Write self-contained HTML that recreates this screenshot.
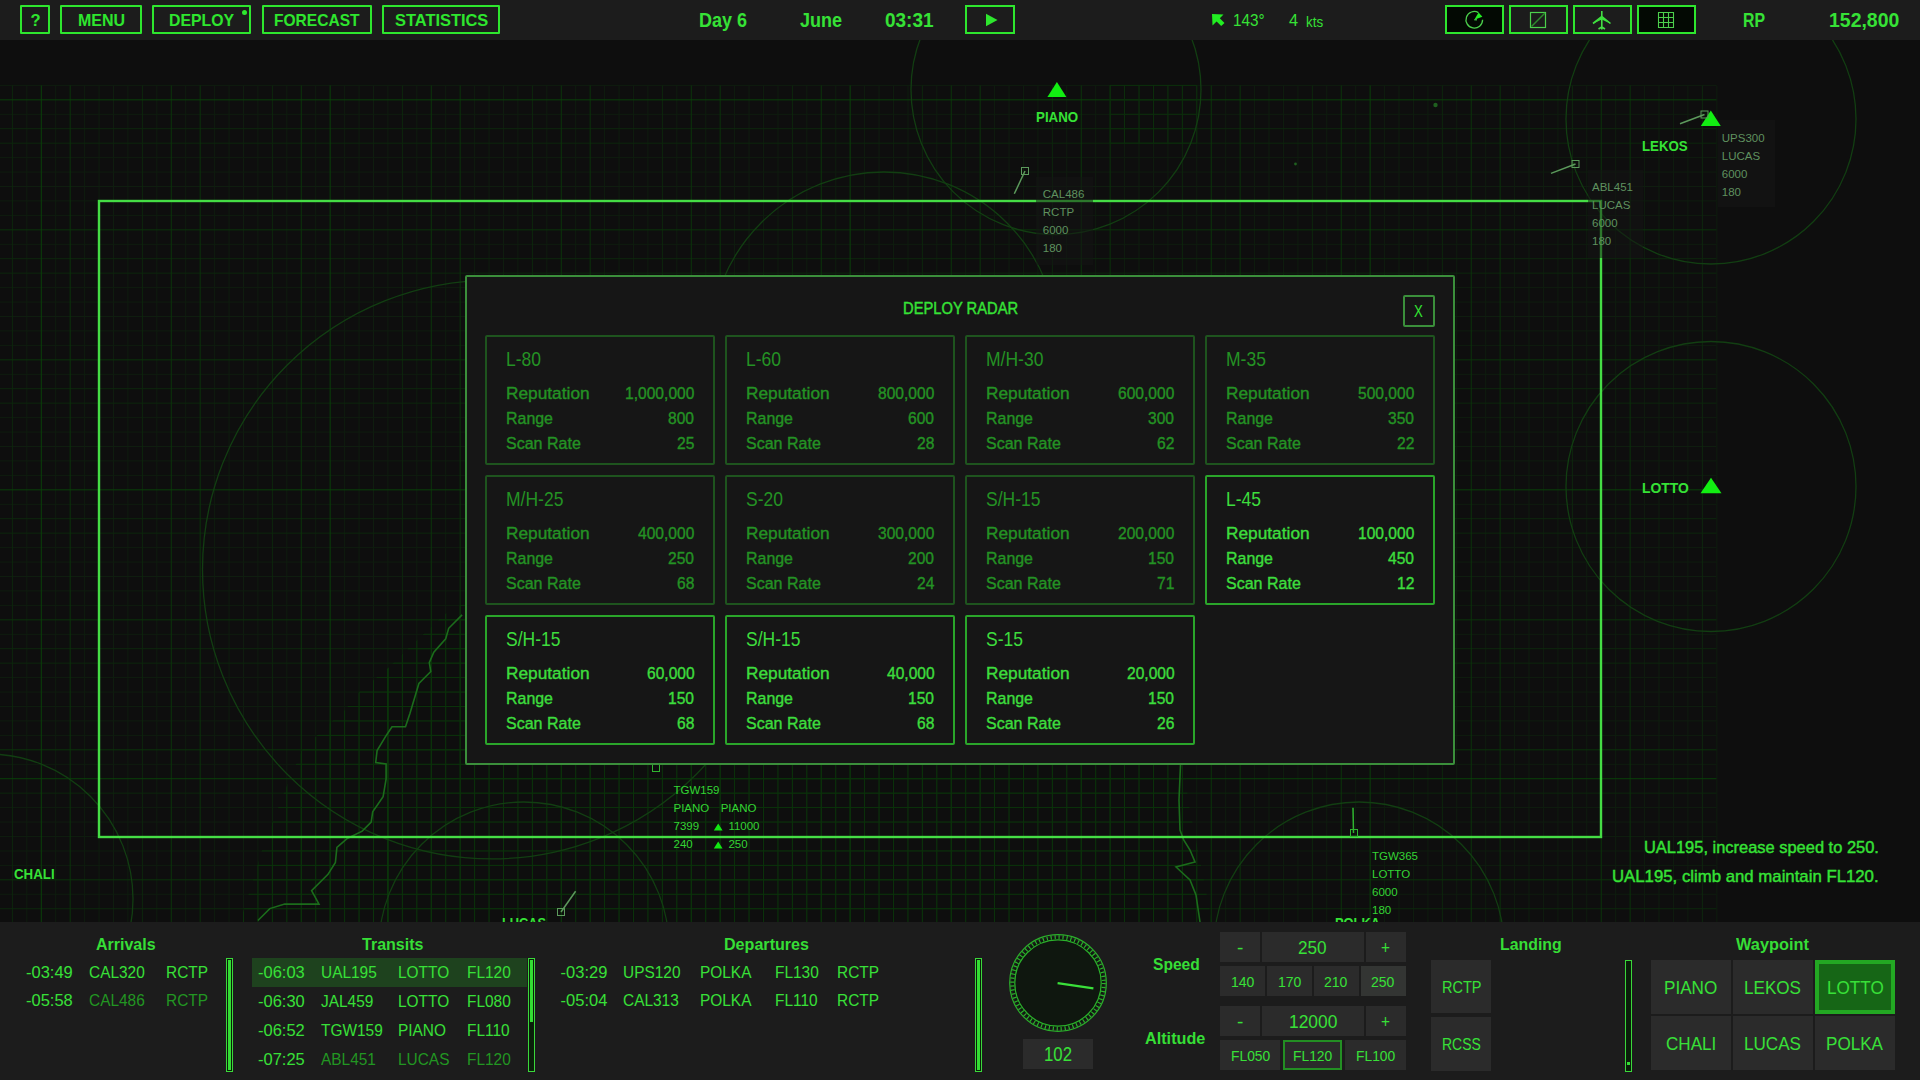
<!DOCTYPE html>
<html><head><meta charset="utf-8"><style>
html,body{margin:0;padding:0;}
body{width:1920px;height:1080px;overflow:hidden;position:relative;background:#0e0e0e;font-family:"Liberation Sans",sans-serif;}
.a{position:absolute;left:0;top:0;}
.t{position:absolute;white-space:nowrap;transform-origin:0 0;}
svg.a{overflow:visible}
</style></head><body>
<svg class="a" width="1920" height="1080" viewBox="0 0 1920 1080"><path d="M-2.04 85.4V1080 M26.84 85.4V1080 M55.73 85.4V1080 M84.62 85.4V1080 M99.06 85.4V1080 M113.51 85.4V1080 M127.95 85.4V1080 M156.84 85.4V1080 M185.73 85.4V1080 M214.62 85.4V1080 M229.06 85.4V1080 M243.50 85.4V1080 M257.95 85.4V1080 M286.84 85.4V1080 M315.72 85.4V1080 M344.61 85.4V1080 M359.06 85.4V1080 M373.50 85.4V1080 M387.94 85.4V1080 M416.83 85.4V1080 M445.72 85.4V1080 M474.61 85.4V1080 M489.05 85.4V1080 M503.50 85.4V1080 M517.94 85.4V1080 M546.83 85.4V1080 M575.72 85.4V1080 M604.60 85.4V1080 M619.05 85.4V1080 M633.49 85.4V1080 M647.94 85.4V1080 M676.82 85.4V1080 M705.71 85.4V1080 M734.60 85.4V1080 M749.04 85.4V1080 M763.49 85.4V1080 M777.93 85.4V1080 M806.82 85.4V1080 M835.71 85.4V1080 M864.60 85.4V1080 M879.04 85.4V1080 M893.48 85.4V1080 M907.93 85.4V1080 M936.82 85.4V1080 M965.70 85.4V1080 M994.59 85.4V1080 M1009.04 85.4V1080 M1023.48 85.4V1080 M1037.92 85.4V1080 M1066.81 85.4V1080 M1095.70 85.4V1080 M1124.59 85.4V1080 M1139.03 85.4V1080 M1153.48 85.4V1080 M1167.92 85.4V1080 M1196.81 85.4V1080 M1225.70 85.4V1080 M1254.58 85.4V1080 M1269.03 85.4V1080 M1283.47 85.4V1080 M1297.92 85.4V1080 M1326.80 85.4V1080 M1355.69 85.4V1080 M1384.58 85.4V1080 M1399.02 85.4V1080 M1413.47 85.4V1080 M1427.91 85.4V1080 M1456.80 85.4V1080 M1485.69 85.4V1080 M1514.58 85.4V1080 M1529.02 85.4V1080 M1543.46 85.4V1080 M1557.91 85.4V1080 M1586.80 85.4V1080 M1615.68 85.4V1080 M1644.57 85.4V1080 M1659.02 85.4V1080 M1673.46 85.4V1080 M1687.90 85.4V1080 M1716.79 85.4V1080 M0 85.40H1716.4 M0 114.29H1716.4 M0 157.62H1716.4 M0 172.06H1716.4 M0 186.51H1716.4 M0 200.95H1716.4 M0 215.40H1716.4 M0 244.28H1716.4 M0 287.62H1716.4 M0 302.06H1716.4 M0 316.50H1716.4 M0 330.95H1716.4 M0 345.39H1716.4 M0 374.28H1716.4 M0 417.61H1716.4 M0 432.06H1716.4 M0 446.50H1716.4 M0 460.94H1716.4 M0 475.39H1716.4 M0 504.28H1716.4 M0 547.61H1716.4 M0 562.05H1716.4 M0 576.50H1716.4 M0 590.94H1716.4 M0 605.38H1716.4 M0 634.27H1716.4 M0 677.60H1716.4 M0 692.05H1716.4 M0 706.49H1716.4 M0 720.94H1716.4 M0 735.38H1716.4 M0 764.27H1716.4 M0 807.60H1716.4 M0 822.04H1716.4 M0 836.49H1716.4 M0 850.93H1716.4 M0 865.38H1716.4 M0 894.26H1716.4" stroke="#0f1d0f" stroke-width="1" fill="none"/><path d="M12.40 85.4V1080 M142.40 85.4V1080 M272.39 85.4V1080 M402.39 85.4V1080 M532.38 85.4V1080 M662.38 85.4V1080 M792.38 85.4V1080 M922.37 85.4V1080 M1052.37 85.4V1080 M1182.36 85.4V1080 M1312.36 85.4V1080 M1442.36 85.4V1080 M1572.35 85.4V1080 M1702.35 85.4V1080 M0 128.73H1716.4 M0 143.18H1716.4 M0 258.73H1716.4 M0 273.17H1716.4 M0 388.72H1716.4 M0 403.17H1716.4 M0 518.72H1716.4 M0 533.16H1716.4 M0 648.72H1716.4 M0 663.16H1716.4 M0 793.16H1716.4 M0 908.71H1716.4" stroke="#0d270d" stroke-width="1" fill="none"/><path d="M70.18 85.4V1080 M171.28 85.4V1080 M200.17 85.4V1080 M301.28 85.4V1080 M431.28 85.4V1080 M460.16 85.4V1080 M561.27 85.4V1080 M590.16 85.4V1080 M691.27 85.4V1080 M720.16 85.4V1080 M821.26 85.4V1080 M951.26 85.4V1080 M980.15 85.4V1080 M1081.26 85.4V1080 M1110.14 85.4V1080 M1211.25 85.4V1080 M1240.14 85.4V1080 M1341.25 85.4V1080 M1471.24 85.4V1080 M1500.13 85.4V1080 M1601.24 85.4V1080 M1630.13 85.4V1080 M0 229.84H1716.4 M0 359.84H1716.4 M0 619.83H1716.4 M0 749.82H1716.4 M0 879.82H1716.4" stroke="#0b340b" stroke-width="1" fill="none"/><path d="M41.29 85.4V1080 M330.17 85.4V1080 M850.15 85.4V1080 M1370.14 85.4V1080 M0 99.84H1716.4 M0 489.83H1716.4 M0 778.71H1716.4" stroke="#0a400a" stroke-width="1" fill="none"/><clipPath id="fc"><polygon points="470,600 445,614 415,642 387,669 359,692 345,710 331,722 302,750 285,790 262,850 240,922 1212,922 1200,860 1188,800 1185,765 470,765"/></clipPath><path clip-path="url(#fc)" d="M214.62 590V922 M229.06 590V922 M243.50 590V922 M257.95 590V922 M272.39 590V922 M286.84 590V922 M301.28 590V922 M315.72 590V922 M330.17 590V922 M344.61 590V922 M359.06 590V922 M373.50 590V922 M387.94 590V922 M402.39 590V922 M416.83 590V922 M431.28 590V922 M445.72 590V922 M460.16 590V922 M474.61 590V922 M489.05 590V922 M503.50 590V922 M517.94 590V922 M532.38 590V922 M546.83 590V922 M561.27 590V922 M575.72 590V922 M590.16 590V922 M604.60 590V922 M619.05 590V922 M633.49 590V922 M647.94 590V922 M662.38 590V922 M676.82 590V922 M691.27 590V922 M705.71 590V922 M720.16 590V922 M734.60 590V922 M749.04 590V922 M763.49 590V922 M777.93 590V922 M792.38 590V922 M806.82 590V922 M821.26 590V922 M835.71 590V922 M850.15 590V922 M864.60 590V922 M879.04 590V922 M893.48 590V922 M907.93 590V922 M922.37 590V922 M936.82 590V922 M951.26 590V922 M965.70 590V922 M980.15 590V922 M994.59 590V922 M1009.04 590V922 M1023.48 590V922 M1037.92 590V922 M1052.37 590V922 M1066.81 590V922 M1081.26 590V922 M1095.70 590V922 M1110.14 590V922 M1124.59 590V922 M1139.03 590V922 M1153.48 590V922 M1167.92 590V922 M1182.36 590V922 M1196.81 590V922 M1211.25 590V922 M1225.70 590V922 M1240.14 590V922 M220 576.50H1220 M220 590.94H1220 M220 605.38H1220 M220 619.83H1220 M220 634.27H1220 M220 648.72H1220 M220 663.16H1220 M220 677.60H1220 M220 692.05H1220 M220 706.49H1220 M220 720.94H1220 M220 735.38H1220 M220 749.82H1220 M220 764.27H1220 M220 778.71H1220 M220 793.16H1220 M220 807.60H1220 M220 822.04H1220 M220 836.49H1220 M220 850.93H1220 M220 865.38H1220 M220 879.82H1220 M220 894.26H1220 M220 908.71H1220" stroke="#0b330b" stroke-width="1" fill="none"/><path clip-path="url(#fc)" d="M387.94 590V922" stroke="#0a400a" stroke-width="1" fill="none"/><path d="M1110.14 85.4V143.2 M1124.59 85.4V143.2 M1139.03 85.4V143.2 M1153.48 85.4V143.2 M1167.92 85.4V143.2 M1182.36 85.4V143.2 M1196.81 85.4V143.2 M1109.8 85.40H1196.8 M1109.8 99.84H1196.8 M1109.8 114.29H1196.8 M1109.8 128.73H1196.8 M1109.8 143.18H1196.8" stroke="#0c2f0c" stroke-width="1" fill="none"/><circle cx="1435.5" cy="105" r="2.2" fill="#1f5f1f"/><circle cx="1295.5" cy="164" r="1.4" fill="#1f5f1f"/><circle cx="1056" cy="89.6" r="145" stroke="#123e12" stroke-width="1.3" fill="none"/><circle cx="1711" cy="119" r="145" stroke="#123e12" stroke-width="1.3" fill="none"/><circle cx="1711" cy="486.5" r="145" stroke="#123e12" stroke-width="1.3" fill="none"/><circle cx="491.8" cy="569.6" r="289.3" stroke="#123e12" stroke-width="1.3" fill="none"/><circle cx="884" cy="346" r="174" stroke="#123e12" stroke-width="1.3" fill="none"/><circle cx="524" cy="947" r="145" stroke="#123e12" stroke-width="1.3" fill="none"/><circle cx="1359" cy="947" r="145" stroke="#123e12" stroke-width="1.3" fill="none"/><circle cx="-12" cy="899" r="145" stroke="#123e12" stroke-width="1.3" fill="none"/><polyline points="462.1,614.9 448.7,628.3 445.7,638.8 433.8,652.2 429.3,662.6 430.8,671.6 418.9,683.5 414.4,698.4 410,713.3 405.5,726.7 392,726.7 386.1,735.7 377.1,750.6 375.7,762.5 386.1,764 386.1,778.9 383.1,796.8 372.7,811.7 371.2,822.1 362.2,831.1 347.3,838.5 336.9,847.5 335.4,862.4 328,874.3 311.6,890.7 319,904.1 299.6,904.1 284.7,904.1 269.8,908.6 257.9,920.5" stroke="#1b6c1b" stroke-width="1.6" fill="none"/><polyline points="1180.5,765 1179,800 1180,830 1183.7,840 1190,850 1195,862 1176,867 1190,880 1196,895 1200,922" stroke="#1b6c1b" stroke-width="1.6" fill="none"/><rect x="99" y="201" width="1502" height="636" stroke="#45dd45" stroke-width="2.4" fill="none"/><rect x="1718" y="120" width="57" height="87" fill="#141414" fill-opacity="0.8"/><rect x="1588" y="170" width="55" height="88" fill="#141414" fill-opacity="0.5"/><rect x="1036" y="177" width="57" height="88" fill="#141414" fill-opacity="0.5"/><path d="M1056.9 81.9L1066.4 96.9L1047.4 96.9Z" fill="#12ee12"/><path d="M1710.8 110.5L1720.8 125.9L1700.8 125.9Z" fill="#12ee12"/><path d="M1711 477.8L1721.5 493.3L1700.5 493.3Z" fill="#12ee12"/><rect x="1021.5" y="167.5" width="7.0" height="7.0" stroke="#5c9a5c" stroke-width="1" fill="none"/><line x1="1025" y1="171" x2="1014.3" y2="193.8" stroke="#5c9a5c" stroke-width="1.5"/><rect x="1701" y="111" width="7" height="7" stroke="#5c9a5c" stroke-width="1" fill="none"/><line x1="1704.5" y1="114.5" x2="1680" y2="123.8" stroke="#5c9a5c" stroke-width="1.5"/><rect x="1572" y="160.5" width="7" height="7.0" stroke="#5c9a5c" stroke-width="1" fill="none"/><line x1="1575.5" y1="164" x2="1551" y2="173.4" stroke="#5c9a5c" stroke-width="1.5"/><rect x="652.5" y="764.5" width="7.0" height="7.0" stroke="#2fb52f" stroke-width="1" fill="none"/><rect x="1350.5" y="829.5" width="7.0" height="7.0" stroke="#2fb52f" stroke-width="1" fill="none"/><line x1="1353.5" y1="833" x2="1353" y2="807.7" stroke="#2fb52f" stroke-width="1.5"/><rect x="557.5" y="908.5" width="7.0" height="7.0" stroke="#5c9a5c" stroke-width="1" fill="none"/><line x1="561" y1="912" x2="575.6" y2="891.2" stroke="#5c9a5c" stroke-width="1.5"/></svg>
<div class="t" style="left:1035.80px;top:108px;font-size:15.1px;line-height:17px;font-weight:700;color:#36e236;transform:scaleX(0.8828);">PIANO</div>
<div class="t" style="left:1642.30px;top:137px;font-size:15.1px;line-height:17px;font-weight:700;color:#36e236;transform:scaleX(0.8788);">LEKOS</div>
<div class="t" style="left:1642.30px;top:479px;font-size:15.1px;line-height:17px;font-weight:700;color:#36e236;transform:scaleX(0.9194);">LOTTO</div>
<div class="t" style="left:14.30px;top:865px;font-size:15.1px;line-height:17px;font-weight:700;color:#36e236;transform:scaleX(0.8819);">CHALI</div>
<div class="t" style="left:501.90px;top:914px;font-size:15.1px;line-height:17px;font-weight:700;color:#36e236;transform:scaleX(0.8462);">LUCAS</div>
<div class="t" style="left:1334.70px;top:914px;font-size:15.1px;line-height:17px;font-weight:700;color:#36e236;transform:scaleX(0.8515);">POLKA</div>
<div class="t" style="left:1042.80px;top:188px;font-size:11.5px;line-height:12px;font-weight:400;color:#5f915f;">CAL486</div>
<div class="t" style="left:1042.80px;top:206px;font-size:11.5px;line-height:12px;font-weight:400;color:#5f915f;">RCTP</div>
<div class="t" style="left:1042.80px;top:224px;font-size:11.5px;line-height:12px;font-weight:400;color:#5f915f;">6000</div>
<div class="t" style="left:1042.80px;top:242px;font-size:11.5px;line-height:12px;font-weight:400;color:#5f915f;">180</div>
<div class="t" style="left:1592.00px;top:181px;font-size:11.5px;line-height:12px;font-weight:400;color:#5f915f;">ABL451</div>
<div class="t" style="left:1592.00px;top:199px;font-size:11.5px;line-height:12px;font-weight:400;color:#5f915f;">LUCAS</div>
<div class="t" style="left:1592.00px;top:217px;font-size:11.5px;line-height:12px;font-weight:400;color:#5f915f;">6000</div>
<div class="t" style="left:1592.00px;top:235px;font-size:11.5px;line-height:12px;font-weight:400;color:#5f915f;">180</div>
<div class="t" style="left:1721.80px;top:132px;font-size:11.5px;line-height:12px;font-weight:400;color:#5f915f;">UPS300</div>
<div class="t" style="left:1721.80px;top:150px;font-size:11.5px;line-height:12px;font-weight:400;color:#5f915f;">LUCAS</div>
<div class="t" style="left:1721.80px;top:168px;font-size:11.5px;line-height:12px;font-weight:400;color:#5f915f;">6000</div>
<div class="t" style="left:1721.80px;top:186px;font-size:11.5px;line-height:12px;font-weight:400;color:#5f915f;">180</div>
<div class="t" style="left:1372.00px;top:850px;font-size:11.5px;line-height:12px;font-weight:400;color:#34d434;">TGW365</div>
<div class="t" style="left:1372.00px;top:868px;font-size:11.5px;line-height:12px;font-weight:400;color:#34d434;">LOTTO</div>
<div class="t" style="left:1372.00px;top:886px;font-size:11.5px;line-height:12px;font-weight:400;color:#34d434;">6000</div>
<div class="t" style="left:1372.00px;top:904px;font-size:11.5px;line-height:12px;font-weight:400;color:#34d434;">180</div>
<div class="t" style="left:673.50px;top:784px;font-size:11.5px;line-height:12px;font-weight:400;color:#34d434;">TGW159</div>
<div class="t" style="left:673.50px;top:802px;font-size:11.5px;line-height:12px;font-weight:400;color:#34d434;">PIANO</div>
<div class="t" style="left:720.70px;top:802px;font-size:11.5px;line-height:12px;font-weight:400;color:#34d434;">PIANO</div>
<div class="t" style="left:673.50px;top:820px;font-size:11.5px;line-height:12px;font-weight:400;color:#34d434;">7399</div>
<div class="t" style="left:728.40px;top:820px;font-size:11.5px;line-height:12px;font-weight:400;color:#34d434;">11000</div>
<div class="t" style="left:673.50px;top:838px;font-size:11.5px;line-height:12px;font-weight:400;color:#34d434;">240</div>
<div class="t" style="left:728.40px;top:838px;font-size:11.5px;line-height:12px;font-weight:400;color:#34d434;">250</div>
<svg class="a" width="1920" height="1080"><path d="M718.2 823.5L722.6 830.5L713.8 830.5Z M718.2 841.5L722.6 848.5L713.8 848.5Z" fill="#12e612"/></svg>
<div class="t" style="left:1644.00px;top:838px;font-size:16.1px;line-height:18px;font-weight:400;color:#36e236;transform:scaleX(1.0215);-webkit-text-stroke:0.4px currentColor;">UAL195, increase speed to 250.</div>
<div class="t" style="left:1612.30px;top:867px;font-size:16.1px;line-height:18px;font-weight:400;color:#36e236;transform:scaleX(1.0420);-webkit-text-stroke:0.4px currentColor;">UAL195, climb and maintain FL120.</div>
<div class="a" style="left:0;top:0;width:1920px;height:40px;background:#1c1c1c"></div>
<div class="a" style="left:20px;top:5px;width:26px;height:25px;border:2px solid #2ee62e;border-radius:1px"></div>
<div class="a" style="left:60px;top:5px;width:78px;height:25px;border:2px solid #2ee62e;border-radius:1px"></div>
<div class="a" style="left:152px;top:5px;width:95px;height:25px;border:2px solid #2ee62e;border-radius:1px"></div>
<div class="a" style="left:262px;top:5px;width:106px;height:25px;border:2px solid #2ee62e;border-radius:1px"></div>
<div class="a" style="left:382px;top:5px;width:114px;height:25px;border:2px solid #2ee62e;border-radius:1px"></div>
<div class="t" style="left:30.50px;top:11px;font-size:16.5px;line-height:18px;font-weight:700;color:#2ee62e;">?</div>
<div class="t" style="left:77.50px;top:11px;font-size:16.76px;line-height:19px;font-weight:700;color:#2ee62e;transform:scaleX(0.9554);">MENU</div>
<div class="t" style="left:169.40px;top:11px;font-size:16.9px;line-height:19px;font-weight:700;color:#2ee62e;transform:scaleX(0.9353);">DEPLOY</div>
<div class="a" style="left:241.9px;top:10px;width:5px;height:5px;border-radius:50%;background:#2ee62e"></div>
<div class="t" style="left:274.40px;top:11px;font-size:16.9px;line-height:19px;font-weight:700;color:#2ee62e;transform:scaleX(0.9209);">FORECAST</div>
<div class="t" style="left:394.60px;top:11px;font-size:16.5px;line-height:18px;font-weight:700;color:#2ee62e;transform:scaleX(0.9947);">STATISTICS</div>
<div class="t" style="left:698.75px;top:9px;font-size:19.5px;line-height:22px;font-weight:700;color:#36e236;transform:scaleX(0.9222);">Day 6</div>
<div class="t" style="left:799.60px;top:9px;font-size:19.5px;line-height:22px;font-weight:700;color:#36e236;transform:scaleX(0.9231);">June</div>
<div class="t" style="left:885.40px;top:9px;font-size:19.5px;line-height:22px;font-weight:700;color:#36e236;transform:scaleX(0.9739);">03:31</div>
<div class="a" style="left:965px;top:5px;width:46px;height:25px;border:2px solid #2ee62e"></div>
<svg class="a" width="1920" height="40"><path d="M986 13.8L997.5 20L986 26.2Z" fill="#2ee62e"/><path d="M1212 14L1223.5 14.5L1219.8 18.2L1224.5 23L1221.2 26L1216.6 21.4L1212.5 25.5Z" fill="#22ee22"/></svg>
<div class="t" style="left:1232.80px;top:11px;font-size:16.3px;line-height:18px;font-weight:400;color:#36e236;transform:scaleX(0.9407);">143°</div>
<div class="t" style="left:1289.00px;top:11px;font-size:16.3px;line-height:18px;font-weight:400;color:#36e236;">4</div>
<div class="t" style="left:1305.80px;top:14px;font-size:14.5px;line-height:16px;font-weight:400;color:#36e236;transform:scaleX(0.9218);">kts</div>
<div class="a" style="left:1445px;top:5px;width:55px;height:25px;border:2px solid #2ee62e;background:#030903"></div>
<div class="a" style="left:1509px;top:5px;width:55px;height:25px;border:2px solid #2ee62e;background:transparent"></div>
<div class="a" style="left:1573px;top:5px;width:55px;height:25px;border:2px solid #2ee62e;background:transparent"></div>
<div class="a" style="left:1637px;top:5px;width:55px;height:25px;border:2px solid #2ee62e;background:#030903"></div>
<svg class="a" width="1920" height="40">
<path d="M1482.6 19.8 A8.3 8.3 0 1 1 1478.45 12.6" stroke="#4ccf4c" stroke-width="1.3" fill="none"/>
<path d="M1474.3 19.8 L1478.6 12.4 L1482.4 16.8 Z" fill="#22ee22"/>
<line x1="1474.3" y1="19.8" x2="1477" y2="19.8" stroke="#4ccf4c" stroke-width="1.2"/>
<rect x="1530.5" y="12.5" width="15" height="15" stroke="#4ccf4c" stroke-width="1.2" fill="none"/>
<line x1="1531.5" y1="26.5" x2="1545" y2="13" stroke="#2c8a2c" stroke-width="1.4"/>
<path d="M1601.8 11 L1601.8 29.5 M1593 23.5 L1601.8 16.5 L1610.5 23.5 M1598.5 29 L1601.8 27 L1605 29" stroke="#44dd44" stroke-width="1.6" fill="none"/>
<path d="M1593.5 23.5 L1601.8 16 L1610 23.5 L1601.8 19.5 Z" fill="#3ae03a"/>
<path d="M1658.5 12.5h15v15h-15z M1663.5 12.5v15 M1668.5 12.5v15 M1658.5 17.5h15 M1658.5 22.5h15" stroke="#4ccf4c" stroke-width="1.1" fill="none"/>
</svg>
<div class="t" style="left:1743.00px;top:9px;font-size:19.5px;line-height:22px;font-weight:700;color:#36e236;transform:scaleX(0.8118);">RP</div>
<div class="t" style="left:1828.90px;top:9px;font-size:19.5px;line-height:22px;font-weight:700;color:#36e236;transform:scaleX(0.9972);">152,800</div>
<div class="a" style="left:465px;top:275px;width:986px;height:486px;border:2px solid #3b8f3b;border-radius:2px;background:#161616"></div>
<div class="t" style="left:902.80px;top:299px;font-size:16.3px;line-height:18px;font-weight:400;color:#36e236;transform:scaleX(0.9042);-webkit-text-stroke:0.4px currentColor;">DEPLOY RADAR</div>
<div class="a" style="left:1403px;top:295px;width:28px;height:28px;border:2px solid #3b8f3b;border-radius:2px"></div>
<div class="t" style="left:1414.30px;top:302px;font-size:16.8px;line-height:19px;font-weight:400;color:#33e633;transform:scaleX(0.7857);">X</div>
<div class="a" style="left:485px;top:335px;width:226px;height:126px;border:2px solid #1e541e;border-radius:2px"></div>
<div class="t" style="left:505.50px;top:348px;font-size:19.8px;line-height:22px;font-weight:400;color:#249224;transform:scaleX(0.8850);">L-80</div>
<div class="t" style="left:505.50px;top:384px;font-size:16.8px;line-height:19px;font-weight:400;color:#249224;transform:scaleX(1.0300);-webkit-text-stroke:0.4px currentColor;">Reputation</div>
<div class="t" style="left:624.88px;top:384px;font-size:16.8px;line-height:19px;font-weight:400;color:#249224;transform:scaleX(0.9300);-webkit-text-stroke:0.4px currentColor;">1,000,000</div>
<div class="t" style="left:505.50px;top:409px;font-size:16.8px;line-height:19px;font-weight:400;color:#249224;transform:scaleX(0.9500);-webkit-text-stroke:0.4px currentColor;">Range</div>
<div class="t" style="left:668.31px;top:409px;font-size:16.8px;line-height:19px;font-weight:400;color:#249224;transform:scaleX(0.9300);-webkit-text-stroke:0.4px currentColor;">800</div>
<div class="t" style="left:505.50px;top:434px;font-size:16.8px;line-height:19px;font-weight:400;color:#249224;transform:scaleX(0.9550);-webkit-text-stroke:0.4px currentColor;">Scan Rate</div>
<div class="t" style="left:677.01px;top:434px;font-size:16.8px;line-height:19px;font-weight:400;color:#249224;transform:scaleX(0.9300);-webkit-text-stroke:0.4px currentColor;">25</div>
<div class="a" style="left:725px;top:335px;width:226px;height:126px;border:2px solid #1e541e;border-radius:2px"></div>
<div class="t" style="left:745.50px;top:348px;font-size:19.8px;line-height:22px;font-weight:400;color:#249224;transform:scaleX(0.8850);">L-60</div>
<div class="t" style="left:745.50px;top:384px;font-size:16.8px;line-height:19px;font-weight:400;color:#249224;transform:scaleX(1.0300);-webkit-text-stroke:0.4px currentColor;">Reputation</div>
<div class="t" style="left:877.90px;top:384px;font-size:16.8px;line-height:19px;font-weight:400;color:#249224;transform:scaleX(0.9300);-webkit-text-stroke:0.4px currentColor;">800,000</div>
<div class="t" style="left:745.50px;top:409px;font-size:16.8px;line-height:19px;font-weight:400;color:#249224;transform:scaleX(0.9500);-webkit-text-stroke:0.4px currentColor;">Range</div>
<div class="t" style="left:908.31px;top:409px;font-size:16.8px;line-height:19px;font-weight:400;color:#249224;transform:scaleX(0.9300);-webkit-text-stroke:0.4px currentColor;">600</div>
<div class="t" style="left:745.50px;top:434px;font-size:16.8px;line-height:19px;font-weight:400;color:#249224;transform:scaleX(0.9550);-webkit-text-stroke:0.4px currentColor;">Scan Rate</div>
<div class="t" style="left:917.01px;top:434px;font-size:16.8px;line-height:19px;font-weight:400;color:#249224;transform:scaleX(0.9300);-webkit-text-stroke:0.4px currentColor;">28</div>
<div class="a" style="left:965px;top:335px;width:226px;height:126px;border:2px solid #1e541e;border-radius:2px"></div>
<div class="t" style="left:985.50px;top:348px;font-size:19.8px;line-height:22px;font-weight:400;color:#249224;transform:scaleX(0.8850);">M/H-30</div>
<div class="t" style="left:985.50px;top:384px;font-size:16.8px;line-height:19px;font-weight:400;color:#249224;transform:scaleX(1.0300);-webkit-text-stroke:0.4px currentColor;">Reputation</div>
<div class="t" style="left:1117.90px;top:384px;font-size:16.8px;line-height:19px;font-weight:400;color:#249224;transform:scaleX(0.9300);-webkit-text-stroke:0.4px currentColor;">600,000</div>
<div class="t" style="left:985.50px;top:409px;font-size:16.8px;line-height:19px;font-weight:400;color:#249224;transform:scaleX(0.9500);-webkit-text-stroke:0.4px currentColor;">Range</div>
<div class="t" style="left:1148.31px;top:409px;font-size:16.8px;line-height:19px;font-weight:400;color:#249224;transform:scaleX(0.9300);-webkit-text-stroke:0.4px currentColor;">300</div>
<div class="t" style="left:985.50px;top:434px;font-size:16.8px;line-height:19px;font-weight:400;color:#249224;transform:scaleX(0.9550);-webkit-text-stroke:0.4px currentColor;">Scan Rate</div>
<div class="t" style="left:1157.01px;top:434px;font-size:16.8px;line-height:19px;font-weight:400;color:#249224;transform:scaleX(0.9300);-webkit-text-stroke:0.4px currentColor;">62</div>
<div class="a" style="left:1205px;top:335px;width:226px;height:126px;border:2px solid #1e541e;border-radius:2px"></div>
<div class="t" style="left:1225.50px;top:348px;font-size:19.8px;line-height:22px;font-weight:400;color:#249224;transform:scaleX(0.8850);">M-35</div>
<div class="t" style="left:1225.50px;top:384px;font-size:16.8px;line-height:19px;font-weight:400;color:#249224;transform:scaleX(1.0300);-webkit-text-stroke:0.4px currentColor;">Reputation</div>
<div class="t" style="left:1357.90px;top:384px;font-size:16.8px;line-height:19px;font-weight:400;color:#249224;transform:scaleX(0.9300);-webkit-text-stroke:0.4px currentColor;">500,000</div>
<div class="t" style="left:1225.50px;top:409px;font-size:16.8px;line-height:19px;font-weight:400;color:#249224;transform:scaleX(0.9500);-webkit-text-stroke:0.4px currentColor;">Range</div>
<div class="t" style="left:1388.31px;top:409px;font-size:16.8px;line-height:19px;font-weight:400;color:#249224;transform:scaleX(0.9300);-webkit-text-stroke:0.4px currentColor;">350</div>
<div class="t" style="left:1225.50px;top:434px;font-size:16.8px;line-height:19px;font-weight:400;color:#249224;transform:scaleX(0.9550);-webkit-text-stroke:0.4px currentColor;">Scan Rate</div>
<div class="t" style="left:1397.01px;top:434px;font-size:16.8px;line-height:19px;font-weight:400;color:#249224;transform:scaleX(0.9300);-webkit-text-stroke:0.4px currentColor;">22</div>
<div class="a" style="left:485px;top:475px;width:226px;height:126px;border:2px solid #1e541e;border-radius:2px"></div>
<div class="t" style="left:505.50px;top:488px;font-size:19.8px;line-height:22px;font-weight:400;color:#249224;transform:scaleX(0.8850);">M/H-25</div>
<div class="t" style="left:505.50px;top:524px;font-size:16.8px;line-height:19px;font-weight:400;color:#249224;transform:scaleX(1.0300);-webkit-text-stroke:0.4px currentColor;">Reputation</div>
<div class="t" style="left:637.90px;top:524px;font-size:16.8px;line-height:19px;font-weight:400;color:#249224;transform:scaleX(0.9300);-webkit-text-stroke:0.4px currentColor;">400,000</div>
<div class="t" style="left:505.50px;top:549px;font-size:16.8px;line-height:19px;font-weight:400;color:#249224;transform:scaleX(0.9500);-webkit-text-stroke:0.4px currentColor;">Range</div>
<div class="t" style="left:668.31px;top:549px;font-size:16.8px;line-height:19px;font-weight:400;color:#249224;transform:scaleX(0.9300);-webkit-text-stroke:0.4px currentColor;">250</div>
<div class="t" style="left:505.50px;top:574px;font-size:16.8px;line-height:19px;font-weight:400;color:#249224;transform:scaleX(0.9550);-webkit-text-stroke:0.4px currentColor;">Scan Rate</div>
<div class="t" style="left:677.01px;top:574px;font-size:16.8px;line-height:19px;font-weight:400;color:#249224;transform:scaleX(0.9300);-webkit-text-stroke:0.4px currentColor;">68</div>
<div class="a" style="left:725px;top:475px;width:226px;height:126px;border:2px solid #1e541e;border-radius:2px"></div>
<div class="t" style="left:745.50px;top:488px;font-size:19.8px;line-height:22px;font-weight:400;color:#249224;transform:scaleX(0.8850);">S-20</div>
<div class="t" style="left:745.50px;top:524px;font-size:16.8px;line-height:19px;font-weight:400;color:#249224;transform:scaleX(1.0300);-webkit-text-stroke:0.4px currentColor;">Reputation</div>
<div class="t" style="left:877.90px;top:524px;font-size:16.8px;line-height:19px;font-weight:400;color:#249224;transform:scaleX(0.9300);-webkit-text-stroke:0.4px currentColor;">300,000</div>
<div class="t" style="left:745.50px;top:549px;font-size:16.8px;line-height:19px;font-weight:400;color:#249224;transform:scaleX(0.9500);-webkit-text-stroke:0.4px currentColor;">Range</div>
<div class="t" style="left:908.31px;top:549px;font-size:16.8px;line-height:19px;font-weight:400;color:#249224;transform:scaleX(0.9300);-webkit-text-stroke:0.4px currentColor;">200</div>
<div class="t" style="left:745.50px;top:574px;font-size:16.8px;line-height:19px;font-weight:400;color:#249224;transform:scaleX(0.9550);-webkit-text-stroke:0.4px currentColor;">Scan Rate</div>
<div class="t" style="left:917.01px;top:574px;font-size:16.8px;line-height:19px;font-weight:400;color:#249224;transform:scaleX(0.9300);-webkit-text-stroke:0.4px currentColor;">24</div>
<div class="a" style="left:965px;top:475px;width:226px;height:126px;border:2px solid #1e541e;border-radius:2px"></div>
<div class="t" style="left:985.50px;top:488px;font-size:19.8px;line-height:22px;font-weight:400;color:#249224;transform:scaleX(0.8850);">S/H-15</div>
<div class="t" style="left:985.50px;top:524px;font-size:16.8px;line-height:19px;font-weight:400;color:#249224;transform:scaleX(1.0300);-webkit-text-stroke:0.4px currentColor;">Reputation</div>
<div class="t" style="left:1117.90px;top:524px;font-size:16.8px;line-height:19px;font-weight:400;color:#249224;transform:scaleX(0.9300);-webkit-text-stroke:0.4px currentColor;">200,000</div>
<div class="t" style="left:985.50px;top:549px;font-size:16.8px;line-height:19px;font-weight:400;color:#249224;transform:scaleX(0.9500);-webkit-text-stroke:0.4px currentColor;">Range</div>
<div class="t" style="left:1148.31px;top:549px;font-size:16.8px;line-height:19px;font-weight:400;color:#249224;transform:scaleX(0.9300);-webkit-text-stroke:0.4px currentColor;">150</div>
<div class="t" style="left:985.50px;top:574px;font-size:16.8px;line-height:19px;font-weight:400;color:#249224;transform:scaleX(0.9550);-webkit-text-stroke:0.4px currentColor;">Scan Rate</div>
<div class="t" style="left:1157.01px;top:574px;font-size:16.8px;line-height:19px;font-weight:400;color:#249224;transform:scaleX(0.9300);-webkit-text-stroke:0.4px currentColor;">71</div>
<div class="a" style="left:1205px;top:475px;width:226px;height:126px;border:2px solid #2aa52a;border-radius:2px"></div>
<div class="t" style="left:1225.50px;top:488px;font-size:19.8px;line-height:22px;font-weight:400;color:#3ddd3d;transform:scaleX(0.8850);">L-45</div>
<div class="t" style="left:1225.50px;top:524px;font-size:16.8px;line-height:19px;font-weight:400;color:#3ddd3d;transform:scaleX(1.0300);-webkit-text-stroke:0.4px currentColor;">Reputation</div>
<div class="t" style="left:1357.90px;top:524px;font-size:16.8px;line-height:19px;font-weight:400;color:#3ddd3d;transform:scaleX(0.9300);-webkit-text-stroke:0.4px currentColor;">100,000</div>
<div class="t" style="left:1225.50px;top:549px;font-size:16.8px;line-height:19px;font-weight:400;color:#3ddd3d;transform:scaleX(0.9500);-webkit-text-stroke:0.4px currentColor;">Range</div>
<div class="t" style="left:1388.31px;top:549px;font-size:16.8px;line-height:19px;font-weight:400;color:#3ddd3d;transform:scaleX(0.9300);-webkit-text-stroke:0.4px currentColor;">450</div>
<div class="t" style="left:1225.50px;top:574px;font-size:16.8px;line-height:19px;font-weight:400;color:#3ddd3d;transform:scaleX(0.9550);-webkit-text-stroke:0.4px currentColor;">Scan Rate</div>
<div class="t" style="left:1397.01px;top:574px;font-size:16.8px;line-height:19px;font-weight:400;color:#3ddd3d;transform:scaleX(0.9300);-webkit-text-stroke:0.4px currentColor;">12</div>
<div class="a" style="left:485px;top:615px;width:226px;height:126px;border:2px solid #2aa52a;border-radius:2px"></div>
<div class="t" style="left:505.50px;top:628px;font-size:19.8px;line-height:22px;font-weight:400;color:#3ddd3d;transform:scaleX(0.8850);">S/H-15</div>
<div class="t" style="left:505.50px;top:664px;font-size:16.8px;line-height:19px;font-weight:400;color:#3ddd3d;transform:scaleX(1.0300);-webkit-text-stroke:0.4px currentColor;">Reputation</div>
<div class="t" style="left:646.60px;top:664px;font-size:16.8px;line-height:19px;font-weight:400;color:#3ddd3d;transform:scaleX(0.9300);-webkit-text-stroke:0.4px currentColor;">60,000</div>
<div class="t" style="left:505.50px;top:689px;font-size:16.8px;line-height:19px;font-weight:400;color:#3ddd3d;transform:scaleX(0.9500);-webkit-text-stroke:0.4px currentColor;">Range</div>
<div class="t" style="left:668.31px;top:689px;font-size:16.8px;line-height:19px;font-weight:400;color:#3ddd3d;transform:scaleX(0.9300);-webkit-text-stroke:0.4px currentColor;">150</div>
<div class="t" style="left:505.50px;top:714px;font-size:16.8px;line-height:19px;font-weight:400;color:#3ddd3d;transform:scaleX(0.9550);-webkit-text-stroke:0.4px currentColor;">Scan Rate</div>
<div class="t" style="left:677.01px;top:714px;font-size:16.8px;line-height:19px;font-weight:400;color:#3ddd3d;transform:scaleX(0.9300);-webkit-text-stroke:0.4px currentColor;">68</div>
<div class="a" style="left:725px;top:615px;width:226px;height:126px;border:2px solid #2aa52a;border-radius:2px"></div>
<div class="t" style="left:745.50px;top:628px;font-size:19.8px;line-height:22px;font-weight:400;color:#3ddd3d;transform:scaleX(0.8850);">S/H-15</div>
<div class="t" style="left:745.50px;top:664px;font-size:16.8px;line-height:19px;font-weight:400;color:#3ddd3d;transform:scaleX(1.0300);-webkit-text-stroke:0.4px currentColor;">Reputation</div>
<div class="t" style="left:886.60px;top:664px;font-size:16.8px;line-height:19px;font-weight:400;color:#3ddd3d;transform:scaleX(0.9300);-webkit-text-stroke:0.4px currentColor;">40,000</div>
<div class="t" style="left:745.50px;top:689px;font-size:16.8px;line-height:19px;font-weight:400;color:#3ddd3d;transform:scaleX(0.9500);-webkit-text-stroke:0.4px currentColor;">Range</div>
<div class="t" style="left:908.31px;top:689px;font-size:16.8px;line-height:19px;font-weight:400;color:#3ddd3d;transform:scaleX(0.9300);-webkit-text-stroke:0.4px currentColor;">150</div>
<div class="t" style="left:745.50px;top:714px;font-size:16.8px;line-height:19px;font-weight:400;color:#3ddd3d;transform:scaleX(0.9550);-webkit-text-stroke:0.4px currentColor;">Scan Rate</div>
<div class="t" style="left:917.01px;top:714px;font-size:16.8px;line-height:19px;font-weight:400;color:#3ddd3d;transform:scaleX(0.9300);-webkit-text-stroke:0.4px currentColor;">68</div>
<div class="a" style="left:965px;top:615px;width:226px;height:126px;border:2px solid #2aa52a;border-radius:2px"></div>
<div class="t" style="left:985.50px;top:628px;font-size:19.8px;line-height:22px;font-weight:400;color:#3ddd3d;transform:scaleX(0.8850);">S-15</div>
<div class="t" style="left:985.50px;top:664px;font-size:16.8px;line-height:19px;font-weight:400;color:#3ddd3d;transform:scaleX(1.0300);-webkit-text-stroke:0.4px currentColor;">Reputation</div>
<div class="t" style="left:1126.60px;top:664px;font-size:16.8px;line-height:19px;font-weight:400;color:#3ddd3d;transform:scaleX(0.9300);-webkit-text-stroke:0.4px currentColor;">20,000</div>
<div class="t" style="left:985.50px;top:689px;font-size:16.8px;line-height:19px;font-weight:400;color:#3ddd3d;transform:scaleX(0.9500);-webkit-text-stroke:0.4px currentColor;">Range</div>
<div class="t" style="left:1148.31px;top:689px;font-size:16.8px;line-height:19px;font-weight:400;color:#3ddd3d;transform:scaleX(0.9300);-webkit-text-stroke:0.4px currentColor;">150</div>
<div class="t" style="left:985.50px;top:714px;font-size:16.8px;line-height:19px;font-weight:400;color:#3ddd3d;transform:scaleX(0.9550);-webkit-text-stroke:0.4px currentColor;">Scan Rate</div>
<div class="t" style="left:1157.01px;top:714px;font-size:16.8px;line-height:19px;font-weight:400;color:#3ddd3d;transform:scaleX(0.9300);-webkit-text-stroke:0.4px currentColor;">26</div>
<div class="a" style="left:0;top:922px;width:1920px;height:158px;background:#1c1c1c"></div>
<div class="t" style="left:96.00px;top:935px;font-size:16.76px;line-height:19px;font-weight:700;color:#36de36;transform:scaleX(0.9551);">Arrivals</div>
<div class="t" style="left:362.20px;top:935px;font-size:16.76px;line-height:19px;font-weight:700;color:#36de36;transform:scaleX(0.9572);">Transits</div>
<div class="t" style="left:724.40px;top:935px;font-size:16.76px;line-height:19px;font-weight:700;color:#36de36;transform:scaleX(0.9610);">Departures</div>
<div class="t" style="left:1152.70px;top:954px;font-size:17.4px;line-height:20px;font-weight:700;color:#36de36;transform:scaleX(0.8966);">Speed</div>
<div class="t" style="left:1145.10px;top:1028px;font-size:17.4px;line-height:20px;font-weight:700;color:#36de36;transform:scaleX(0.9328);">Altitude</div>
<div class="t" style="left:1500.30px;top:935px;font-size:16.76px;line-height:19px;font-weight:700;color:#36de36;transform:scaleX(0.9470);">Landing</div>
<div class="t" style="left:1736.30px;top:935px;font-size:16.76px;line-height:19px;font-weight:700;color:#36de36;transform:scaleX(0.9753);">Waypoint</div>
<div class="t" style="left:26.00px;top:963px;font-size:16.5px;line-height:18px;font-weight:400;color:#38e038;">-03:49</div>
<div class="t" style="left:88.75px;top:963px;font-size:16.5px;line-height:18px;font-weight:400;color:#38e038;transform:scaleX(0.9350);">CAL320</div>
<div class="t" style="left:165.60px;top:963px;font-size:16.5px;line-height:18px;font-weight:400;color:#38e038;transform:scaleX(0.9350);">RCTP</div>
<div class="t" style="left:26.00px;top:991px;font-size:16.5px;line-height:18px;font-weight:400;color:#38e038;">-05:58</div>
<div class="t" style="left:88.75px;top:991px;font-size:16.5px;line-height:18px;font-weight:400;color:#229622;transform:scaleX(0.9350);">CAL486</div>
<div class="t" style="left:165.60px;top:991px;font-size:16.5px;line-height:18px;font-weight:400;color:#229622;transform:scaleX(0.9350);">RCTP</div>
<div class="a" style="left:226px;top:958px;width:5px;height:112px;border:1px solid #3ad83a;background:#0a1f0a"></div>
<div class="a" style="left:228px;top:960px;width:3px;height:110px;background:#33dd33"></div>
<div class="a" style="left:252px;top:958px;width:275px;height:29px;background:#1e421e"></div>
<div class="a" style="left:528px;top:958px;width:5px;height:112px;border:1px solid #3ad83a;background:#0a1f0a"></div>
<div class="a" style="left:530px;top:960px;width:3px;height:62px;background:#33dd33"></div>
<div class="t" style="left:258.00px;top:963px;font-size:16.5px;line-height:18px;font-weight:400;color:#38e038;">-06:03</div>
<div class="t" style="left:320.70px;top:963px;font-size:16.5px;line-height:18px;font-weight:400;color:#38e038;transform:scaleX(0.9350);">UAL195</div>
<div class="t" style="left:397.80px;top:963px;font-size:16.5px;line-height:18px;font-weight:400;color:#38e038;transform:scaleX(0.9350);">LOTTO</div>
<div class="t" style="left:467.40px;top:963px;font-size:16.5px;line-height:18px;font-weight:400;color:#38e038;transform:scaleX(0.9350);">FL120</div>
<div class="t" style="left:258.00px;top:992px;font-size:16.5px;line-height:18px;font-weight:400;color:#38e038;">-06:30</div>
<div class="t" style="left:320.70px;top:992px;font-size:16.5px;line-height:18px;font-weight:400;color:#38e038;transform:scaleX(0.9350);">JAL459</div>
<div class="t" style="left:397.80px;top:992px;font-size:16.5px;line-height:18px;font-weight:400;color:#38e038;transform:scaleX(0.9350);">LOTTO</div>
<div class="t" style="left:467.40px;top:992px;font-size:16.5px;line-height:18px;font-weight:400;color:#38e038;transform:scaleX(0.9350);">FL080</div>
<div class="t" style="left:258.00px;top:1021px;font-size:16.5px;line-height:18px;font-weight:400;color:#38e038;">-06:52</div>
<div class="t" style="left:320.70px;top:1021px;font-size:16.5px;line-height:18px;font-weight:400;color:#38e038;transform:scaleX(0.9350);">TGW159</div>
<div class="t" style="left:397.80px;top:1021px;font-size:16.5px;line-height:18px;font-weight:400;color:#38e038;transform:scaleX(0.9350);">PIANO</div>
<div class="t" style="left:467.40px;top:1021px;font-size:16.5px;line-height:18px;font-weight:400;color:#38e038;transform:scaleX(0.9350);">FL110</div>
<div class="t" style="left:258.00px;top:1050px;font-size:16.5px;line-height:18px;font-weight:400;color:#38e038;">-07:25</div>
<div class="t" style="left:320.70px;top:1050px;font-size:16.5px;line-height:18px;font-weight:400;color:#229622;transform:scaleX(0.9350);">ABL451</div>
<div class="t" style="left:397.80px;top:1050px;font-size:16.5px;line-height:18px;font-weight:400;color:#229622;transform:scaleX(0.9350);">LUCAS</div>
<div class="t" style="left:467.40px;top:1050px;font-size:16.5px;line-height:18px;font-weight:400;color:#229622;transform:scaleX(0.9350);">FL120</div>
<div class="t" style="left:560.60px;top:963px;font-size:16.5px;line-height:18px;font-weight:400;color:#38e038;">-03:29</div>
<div class="t" style="left:622.60px;top:963px;font-size:16.5px;line-height:18px;font-weight:400;color:#38e038;transform:scaleX(0.9350);">UPS120</div>
<div class="t" style="left:699.60px;top:963px;font-size:16.5px;line-height:18px;font-weight:400;color:#38e038;transform:scaleX(0.9350);">POLKA</div>
<div class="t" style="left:774.50px;top:963px;font-size:16.5px;line-height:18px;font-weight:400;color:#38e038;transform:scaleX(0.9350);">FL130</div>
<div class="t" style="left:836.90px;top:963px;font-size:16.5px;line-height:18px;font-weight:400;color:#38e038;transform:scaleX(0.9350);">RCTP</div>
<div class="t" style="left:560.60px;top:991px;font-size:16.5px;line-height:18px;font-weight:400;color:#38e038;">-05:04</div>
<div class="t" style="left:622.60px;top:991px;font-size:16.5px;line-height:18px;font-weight:400;color:#38e038;transform:scaleX(0.9350);">CAL313</div>
<div class="t" style="left:699.60px;top:991px;font-size:16.5px;line-height:18px;font-weight:400;color:#38e038;transform:scaleX(0.9350);">POLKA</div>
<div class="t" style="left:774.50px;top:991px;font-size:16.5px;line-height:18px;font-weight:400;color:#38e038;transform:scaleX(0.9350);">FL110</div>
<div class="t" style="left:836.90px;top:991px;font-size:16.5px;line-height:18px;font-weight:400;color:#38e038;transform:scaleX(0.9350);">RCTP</div>
<div class="a" style="left:975px;top:958px;width:5px;height:112px;border:1px solid #3ad83a;background:#0a1f0a"></div>
<div class="a" style="left:977px;top:960px;width:3px;height:110px;background:#33dd33"></div>
<svg class="a" width="1920" height="1080">
<circle cx="1058" cy="983" r="46" fill="#0f170f"/>
<circle cx="1058" cy="983" r="48.3" stroke="#2bb02b" stroke-width="1.2" fill="none"/>
<circle cx="1058" cy="983" r="43.2" stroke="#2bb02b" stroke-width="1.2" fill="none"/>
<circle cx="1058" cy="983" r="45.8" stroke="#2bb02b" stroke-width="4" stroke-dasharray="1.2 2.8" fill="none"/>
<line x1="1057.6" y1="983.1" x2="1093.4" y2="988.4" stroke="#3ae03a" stroke-width="2.4"/>
</svg>
<div class="a" style="left:1023px;top:1039px;width:70px;height:30px;background:#2b2b2b"></div>
<div class="t" style="left:1044.00px;top:1043px;font-size:19.5px;line-height:22px;font-weight:400;color:#38e038;transform:scaleX(0.8602);">102</div>
<div class="a" style="left:1220px;top:932px;width:40px;height:30px;background:#2b2b2b;"></div>
<div class="a" style="left:1261.5px;top:932px;width:102.5px;height:30px;background:#2b2b2b;"></div>
<div class="a" style="left:1366px;top:932px;width:40px;height:30px;background:#2b2b2b;"></div>
<div class="a" style="left:1220px;top:966px;width:45px;height:30px;background:#2b2b2b;"></div>
<div class="a" style="left:1267px;top:966px;width:45px;height:30px;background:#2b2b2b;"></div>
<div class="a" style="left:1314px;top:966px;width:45px;height:30px;background:#2b2b2b;"></div>
<div class="a" style="left:1361px;top:966px;width:45px;height:30px;background:#333533;"></div>
<div class="a" style="left:1220px;top:1006px;width:40px;height:30px;background:#2b2b2b;"></div>
<div class="a" style="left:1261.5px;top:1006px;width:102.5px;height:30px;background:#2b2b2b;"></div>
<div class="a" style="left:1366px;top:1006px;width:40px;height:30px;background:#2b2b2b;"></div>
<div class="a" style="left:1220px;top:1040px;width:60px;height:30px;background:#2b2b2b;"></div>
<div class="a" style="left:1283px;top:1040px;width:59px;height:30px;background:#2b2b2b;box-sizing:border-box;border:2px solid #238f23"></div>
<div class="a" style="left:1345px;top:1040px;width:61px;height:30px;background:#2b2b2b;"></div>
<div class="t" style="left:1237.00px;top:937px;font-size:19px;line-height:21px;font-weight:400;color:#38e038;">-</div>
<div class="t" style="left:1298.40px;top:937px;font-size:19px;line-height:21px;font-weight:400;color:#38e038;transform:scaleX(0.9022);">250</div>
<div class="t" style="left:1380.80px;top:937px;font-size:19px;line-height:21px;font-weight:400;color:#38e038;transform:scaleX(0.8108);">+</div>
<div class="t" style="left:1237.00px;top:1011px;font-size:19px;line-height:21px;font-weight:400;color:#38e038;">-</div>
<div class="t" style="left:1288.60px;top:1011px;font-size:19px;line-height:21px;font-weight:400;color:#38e038;transform:scaleX(0.9158);">12000</div>
<div class="t" style="left:1380.80px;top:1011px;font-size:19px;line-height:21px;font-weight:400;color:#38e038;transform:scaleX(0.8108);">+</div>
<div class="t" style="left:1230.50px;top:974px;font-size:14.8px;line-height:16px;font-weight:400;color:#38e038;transform:scaleX(0.9470);">140</div>
<div class="t" style="left:1277.50px;top:974px;font-size:14.8px;line-height:16px;font-weight:400;color:#38e038;transform:scaleX(0.9470);">170</div>
<div class="t" style="left:1324.30px;top:974px;font-size:14.8px;line-height:16px;font-weight:400;color:#38e038;transform:scaleX(0.9470);">210</div>
<div class="t" style="left:1371.00px;top:974px;font-size:14.8px;line-height:16px;font-weight:400;color:#38e038;transform:scaleX(0.9470);">250</div>
<div class="t" style="left:1230.50px;top:1048px;font-size:14.8px;line-height:16px;font-weight:400;color:#38e038;transform:scaleX(0.9340);">FL050</div>
<div class="t" style="left:1293.00px;top:1048px;font-size:14.8px;line-height:16px;font-weight:400;color:#38e038;transform:scaleX(0.9340);">FL120</div>
<div class="t" style="left:1355.50px;top:1048px;font-size:14.8px;line-height:16px;font-weight:400;color:#38e038;transform:scaleX(0.9340);">FL100</div>
<div class="a" style="left:1431px;top:960px;width:60px;height:53px;background:#2b2b2b;"></div>
<div class="a" style="left:1431px;top:1017px;width:60px;height:54px;background:#2b2b2b;"></div>
<div class="t" style="left:1441.50px;top:979px;font-size:16px;line-height:17px;font-weight:400;color:#38e038;transform:scaleX(0.9070);">RCTP</div>
<div class="t" style="left:1441.50px;top:1036px;font-size:16px;line-height:17px;font-weight:400;color:#38e038;transform:scaleX(0.8729);">RCSS</div>
<div class="a" style="left:1625px;top:960px;width:5px;height:110px;border:1px solid #3ad83a;background:#0a1f0a"></div>
<div class="a" style="left:1627px;top:1062px;width:3px;height:3px;background:#33dd33"></div>
<div class="a" style="left:1651px;top:960px;width:80px;height:54px;background:#2b2b2b;"></div>
<div class="t" style="left:1664.37px;top:978px;font-size:18.2px;line-height:20px;font-weight:400;color:#38e038;transform:scaleX(0.9400);">PIANO</div>
<div class="a" style="left:1733px;top:960px;width:80px;height:54px;background:#2b2b2b;"></div>
<div class="t" style="left:1744.47px;top:978px;font-size:18.2px;line-height:20px;font-weight:400;color:#38e038;transform:scaleX(0.9400);">LEKOS</div>
<div class="a" style="left:1815px;top:960px;width:80px;height:54px;background:#166616;box-sizing:border-box;border:4px solid #23a823"></div>
<div class="t" style="left:1826.64px;top:978px;font-size:18.2px;line-height:20px;font-weight:400;color:#38e038;transform:scaleX(0.9400);">LOTTO</div>
<div class="a" style="left:1651px;top:1016px;width:80px;height:54px;background:#2b2b2b;"></div>
<div class="t" style="left:1665.81px;top:1034px;font-size:18.2px;line-height:20px;font-weight:400;color:#38e038;transform:scaleX(0.9400);">CHALI</div>
<div class="a" style="left:1733px;top:1016px;width:80px;height:54px;background:#2b2b2b;"></div>
<div class="t" style="left:1744.47px;top:1034px;font-size:18.2px;line-height:20px;font-weight:400;color:#38e038;transform:scaleX(0.9400);">LUCAS</div>
<div class="a" style="left:1815px;top:1016px;width:80px;height:54px;background:#2b2b2b;"></div>
<div class="t" style="left:1826.47px;top:1034px;font-size:18.2px;line-height:20px;font-weight:400;color:#38e038;transform:scaleX(0.9400);">POLKA</div>
</body></html>
